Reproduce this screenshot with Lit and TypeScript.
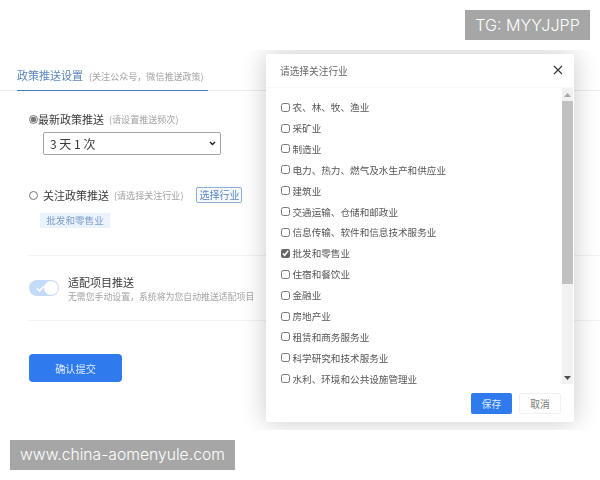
import { LitElement, html, css, unsafeCSS } from 'lit';
import { customElement } from 'lit/decorators.js';

const INDUSTRIES = [
    '农、林、牧、渔业',
    '采矿业',
    '制造业',
    '电力、热力、燃气及水生产和供应业',
    '建筑业',
    '交通运输、仓储和邮政业',
    '信息传输、软件和信息技术服务业',
    '批发和零售业',
    '住宿和餐饮业',
    '金融业',
    '房地产业',
    '租赁和商务服务业',
    '科学研究和技术服务业',
    '水利、环境和公共设施管理业',
];

const CHEVRON = unsafeCSS(
    "url(\"data:image/svg+xml,%3Csvg xmlns='http://www.w3.org/2000/svg' width='7' height='5' viewBox='0 0 7 5'%3E%3Cpath d='M1 1 L3.5 3.5 L6 1' fill='none' stroke='%23222' stroke-width='1.4'/%3E%3C/svg%3E\")"
);

@customElement('app-root')
export class AppRoot extends LitElement {
    static styles = css`
        :host {
            display: block;
            width: 600px;
            height: 480px;
            position: relative;
            overflow: hidden;
            background: #fff;
            color: #3a3a3a;
            font-family: "Noto Sans CJK SC", "Noto Sans", sans-serif;
        }

        .page {
            height: 480px;
            padding-top: 66px;
            box-sizing: border-box;
            filter: blur(0.45px);
        }

        .tabs {
            display: flex;
            padding-left: 17px;
            border-bottom: 1px solid #e9edf2;
        }

        .tab {
            width: 191px;
            height: 25px;
            line-height: 18px;
            margin-bottom: -1px;
            box-sizing: border-box;
            border-bottom: 1.5px solid #4a78bd;
            font-size: 11px;
            color: #5a86c0;
            white-space: nowrap;
        }

        .hint {
            font-size: 9.05px;
            color: #a3a3a3;
        }

        .tab .hint {
            margin-left: 6px;
        }

        .form {
            padding: 19px 0 0 29px;
        }

        .line {
            display: flex;
            align-items: center;
            height: 18px;
            font-size: 11px;
            white-space: nowrap;
        }

        input[type='radio'] {
            width: 9px;
            height: 9px;
            margin: 0;
            accent-color: #777;
        }

        .choice {
            margin-left: 5px;
        }

        .first .choice {
            margin-left: 0;
        }

        .line .hint {
            margin-left: 5px;
        }

        select {
            display: block;
            width: 178px;
            height: 23px;
            margin: 4px 0 0 14px;
            padding: 0 6px;
            box-sizing: border-box;
            appearance: none;
            border: 1px solid #a5a5a5;
            border-radius: 2px;
            background: #fff ${CHEVRON} no-repeat right 4px center;
            color: #3a3a3a;
            font-family: inherit;
            font-size: 12px;
        }

        .second {
            height: 16px;
            margin-top: 32px;
        }

        .pick {
            width: 46px;
            height: 16px;
            margin-left: 13px;
            padding: 0;
            box-sizing: border-box;
            border: 1px solid #8fb0d6;
            border-radius: 2px;
            background: #f5f9fd;
            color: #5a86c0;
            font-family: inherit;
            font-size: 10px;
            line-height: 14px;
        }

        .tag {
            width: 70px;
            height: 15px;
            margin: 10px 0 0 11px;
            background: #eaf3fc;
            color: #7d9cc8;
            font-size: 9.6px;
            line-height: 15px;
            text-align: center;
        }

        .divider {
            height: 1px;
            margin-left: 29px;
            background: #f2f3f5;
        }

        .divider.upper {
            margin-top: 27px;
        }

        .adapt {
            display: flex;
            gap: 9px;
            padding: 19px 0 16px 29px;
        }

        .toggle {
            position: relative;
            width: 30px;
            height: 16px;
            margin-top: 5px;
            border-radius: 8px;
            background: #c3dbf6;
        }

        .toggle svg {
            position: absolute;
            left: 7px;
            top: 5px;
        }

        .knob {
            position: absolute;
            right: 1px;
            top: 1px;
            width: 14px;
            height: 14px;
            border-radius: 50%;
            background: #fff;
        }

        .adapt-title {
            font-size: 11px;
            line-height: 14px;
        }

        .adapt-desc {
            margin-top: 1px;
            font-size: 8.9px;
            line-height: 14px;
            color: #a3a3a3;
            white-space: nowrap;
        }

        .submit {
            display: block;
            width: 93px;
            height: 28px;
            margin: 33px 0 0 29px;
            padding: 0;
            border: none;
            border-radius: 4px;
            background: #2f7bee;
            color: #dbe8fd;
            font-family: inherit;
            font-size: 10.2px;
        }

        .modal-clip {
            position: absolute;
            left: 200px;
            top: 50px;
            width: 400px;
            height: 380px;
            overflow: hidden;
            filter: blur(0.45px);
        }

        .modal {
            display: flex;
            flex-direction: column;
            width: 308px;
            height: 368px;
            margin: 4px 0 0 66px;
            border-radius: 2px;
            background: #fff;
            box-shadow: 0 0 26px rgba(0, 0, 0, 0.22);
        }

        .modal-head {
            display: flex;
            align-items: center;
            justify-content: space-between;
            height: 33px;
            padding: 0 11px 0 14px;
            border-bottom: 1px solid #f8f8f8;
            font-size: 9.7px;
            color: #666;
        }

        .modal-head svg {
            margin-top: -2px;
        }

        .modal-body {
            display: flex;
            height: 296px;
        }

        .list {
            flex: 1;
            padding: 8.7px 0 0 15px;
        }

        .row {
            display: flex;
            align-items: center;
            gap: 3px;
            height: 20.9px;
            font-size: 9.6px;
            line-height: 10px;
            color: #555;
            white-space: nowrap;
        }

        .row:last-child {
            height: 15px;
            padding-top: 5.9px;
            box-sizing: border-box;
        }

        input[type='checkbox'] {
            width: 9px;
            height: 9px;
            margin: 0 0 0 -0.5px;
            accent-color: #666;
        }

        .scrollbar {
            display: flex;
            flex-direction: column;
            width: 11px;
            margin-right: 1px;
            background: #f1f1f1;
        }

        .arrow {
            display: flex;
            align-items: center;
            justify-content: center;
            height: 13px;
        }

        .thumb {
            height: 183px;
            background: #c1c1c1;
        }

        .track {
            flex: 1;
        }

        .modal-foot {
            display: flex;
            justify-content: flex-end;
            gap: 7px;
            padding: 9px 13px 0 0;
        }

        .modal-foot button {
            height: 21px;
            padding: 0;
            box-sizing: border-box;
            border-radius: 2px;
            font-family: inherit;
            font-size: 9.7px;
        }

        .save {
            width: 41px;
            border: none;
            background: #2f7bee;
            color: #dbe8fd;
        }

        .cancel {
            width: 42px;
            border: 1px solid #f0f0f0;
            background: #fff;
            color: #777;
        }

        .mark {
            position: absolute;
            height: 30px;
            background: #a6a6a6;
            color: #fff;
            font-family: Inter, "Liberation Sans", sans-serif;
            font-size: 15.7px;
            font-weight: 300;
            line-height: 30px;
            text-align: center;
            white-space: nowrap;
        }

        .mark.tg {
            left: 465px;
            top: 10px;
            width: 125px;
            font-size: 16.1px;
        }

        .mark.site {
            left: 10px;
            top: 440px;
            width: 225px;
        }
    `;

    render() {
        return html`
            <div class="page">
                <div class="tabs">
                    <div class="tab">政策推送设置<span class="hint">(关注公众号，微信推送政策)</span></div>
                </div>
                <div class="form">
                    <div class="line first">
                        <input type="radio" name="mode" checked />
                        <span class="choice">最新政策推送</span>
                        <span class="hint">(请设置推送频次)</span>
                    </div>
                    <select><option>3 天 1 次</option></select>
                    <div class="line second">
                        <input type="radio" name="mode" />
                        <span class="choice">关注政策推送</span>
                        <span class="hint">(请选择关注行业)</span>
                        <button class="pick">选择行业</button>
                    </div>
                    <div class="tag">批发和零售业</div>
                </div>
                <div class="divider upper"></div>
                <div class="adapt">
                    <div class="toggle">
                        <svg width="9" height="7" viewBox="0 0 9 7" fill="none" stroke="#fff" stroke-width="1.5">
                            <path d="M1 3.5 L3.5 6 L8 1" />
                        </svg>
                        <div class="knob"></div>
                    </div>
                    <div>
                        <div class="adapt-title">适配项目推送</div>
                        <div class="adapt-desc">无需您手动设置，系统将为您自动推送适配项目</div>
                    </div>
                </div>
                <div class="divider"></div>
                <button class="submit">确认提交</button>
            </div>

            <div class="modal-clip">
                <div class="modal">
                    <div class="modal-head">
                        <span>请选择关注行业</span>
                        <svg width="10" height="10" viewBox="0 0 10 10" stroke="#333" stroke-width="1.1">
                            <path d="M1 1 L9 9 M9 1 L1 9" />
                        </svg>
                    </div>
                    <div class="modal-body">
                        <div class="list">
                            ${INDUSTRIES.map(
                                (name) => html`
                                    <label class="row">
                                        <input type="checkbox" ?checked=${name === '批发和零售业'} />
                                        <span>${name}</span>
                                    </label>
                                `
                            )}
                        </div>
                        <div class="scrollbar">
                            <div class="arrow">
                                <svg width="7" height="4" viewBox="0 0 7 4"><path d="M3.5 0 L7 4 L0 4 Z" fill="#a8a8a8" /></svg>
                            </div>
                            <div class="thumb"></div>
                            <div class="track"></div>
                            <div class="arrow">
                                <svg width="7" height="4" viewBox="0 0 7 4"><path d="M0 0 L7 0 L3.5 4 Z" fill="#505050" /></svg>
                            </div>
                        </div>
                    </div>
                    <div class="modal-foot">
                        <button class="save">保存</button>
                        <button class="cancel">取消</button>
                    </div>
                </div>
            </div>

            <div class="mark tg">TG: MYYJJPP</div>
            <div class="mark site">www.china-aomenyule.com</div>
        `;
    }
}
